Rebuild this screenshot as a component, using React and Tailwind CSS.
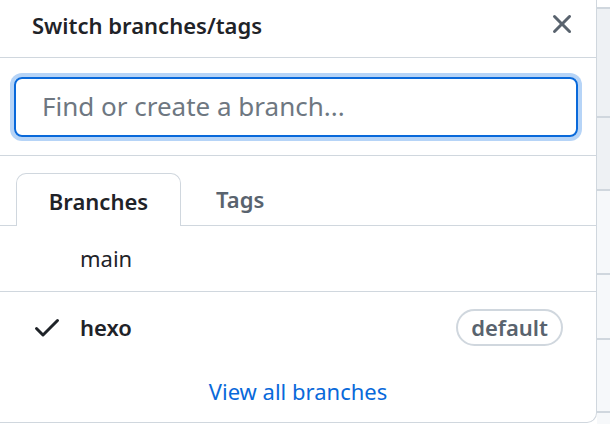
import React from 'react';

function XIcon() {
  return (
    <svg viewBox="0 0 16 16" width="32" height="32" fill="#59636e">
      <path d="M3.72 3.72a.75.75 0 0 1 1.06 0L8 6.94l3.22-3.22a.749.749 0 0 1 1.275.326.749.749 0 0 1-.215.734L9.06 8l3.22 3.22a.749.749 0 0 1-.326 1.275.749.749 0 0 1-.734-.215L8 9.06l-3.22 3.22a.751.751 0 0 1-1.042-.018.751.751 0 0 1-.018-1.042L6.94 8 3.72 4.78a.75.75 0 0 1 0-1.06Z" />
    </svg>
  );
}

function CheckIcon() {
  return (
    <svg viewBox="0 0 16 16" width="32" height="32" fill="#1f2328">
      <path d="M13.78 4.22a.75.75 0 0 1 0 1.06l-7.25 7.25a.75.75 0 0 1-1.06 0L2.22 9.28a.751.751 0 0 1 .018-1.042.751.751 0 0 1 1.042-.018L6 10.94l6.72-6.72a.75.75 0 0 1 1.06 0Z" />
    </svg>
  );
}

export default function App() {
  return (
    <div className="flex w-[610px] h-[424px] bg-white overflow-hidden font-['Noto_Sans',sans-serif] text-[#1f2328]">
      {/* dropdown panel */}
      <div className="w-[597px] h-[423px] shrink-0 flex flex-col border-r border-b border-[#d0d7de] rounded-br-[10px] bg-white">
        {/* header */}
        <div className="h-[58px] shrink-0 flex items-center justify-between border-b border-[#d0d7de] pl-[32px] pr-[18px]">
          <h2 className="text-[22px] font-semibold leading-none pb-[8px]">Switch branches/tags</h2>
          <button className="-mt-[10px]">
            <XIcon />
          </button>
        </div>

        {/* filter */}
        <div className="h-[98px] shrink-0 flex items-center border-b border-[#d0d7de] pl-[14px] pr-[18px]">
          <div className="w-full h-[60px] rounded-[8px] border-2 border-[#0969da] ring-4 ring-[#b6d4f7] flex items-center pl-[26px]">
            <span className="text-[26px] text-[#6e7781]">Find or create a branch...</span>
          </div>
        </div>

        {/* tabs */}
        <div className="h-[70px] shrink-0 flex items-end border-b border-[#d0d7de] pl-[16px]">
          <div className="h-[53px] w-[165px] -mb-px flex items-center justify-center pt-[2px] border border-b-0 border-[#d0d7de] rounded-t-[10px] bg-white text-[22px] font-semibold text-[#1f2328]">
            Branches
          </div>
          <div className="h-[53px] flex items-center pt-[2px] pl-[35px] text-[22px] font-semibold text-[#59636e]">
            Tags
          </div>
        </div>

        {/* branches */}
        <div className="h-[66px] shrink-0 flex items-center border-b border-[#d0d7de] pl-[80px] text-[22px]">
          main
        </div>
        <div className="h-[70px] shrink-0 flex items-center pl-[31px] pr-[33px]">
          <CheckIcon />
          <span className="ml-[17px] text-[22px] font-semibold">hexo</span>
          <span className="ml-auto h-[37px] px-[13px] flex items-center rounded-full border-2 border-[#d0d7de] text-[22px] font-semibold text-[#59636e]">
            default
          </span>
        </div>
        <div className="flex-1 flex items-center justify-center pb-[2px]">
          <a className="text-[22px] text-[#0969da]">View all branches</a>
        </div>
      </div>

      {/* page behind, peeking out on the right */}
      <div className="flex-1 flex flex-col bg-[#f6f8fa]">
        <div className="h-[7px] bg-white" />
        <div className="h-[109px] border-t-2 border-[#d0d7de] bg-[#eef1f4]" />
        <div className="h-[73px] border-t-2 border-[#d0d7de] bg-[#eef1f4]" />
        <div className="h-[84px] border-t-2 border-[#d0d7de]" />
        <div className="h-[65px] border-t-2 border-[#d0d7de]" />
        <div className="h-[73px] border-t-2 border-[#d0d7de]" />
        <div className="flex-1 border-t-2 border-[#d0d7de]" />
      </div>
    </div>
  );
}
